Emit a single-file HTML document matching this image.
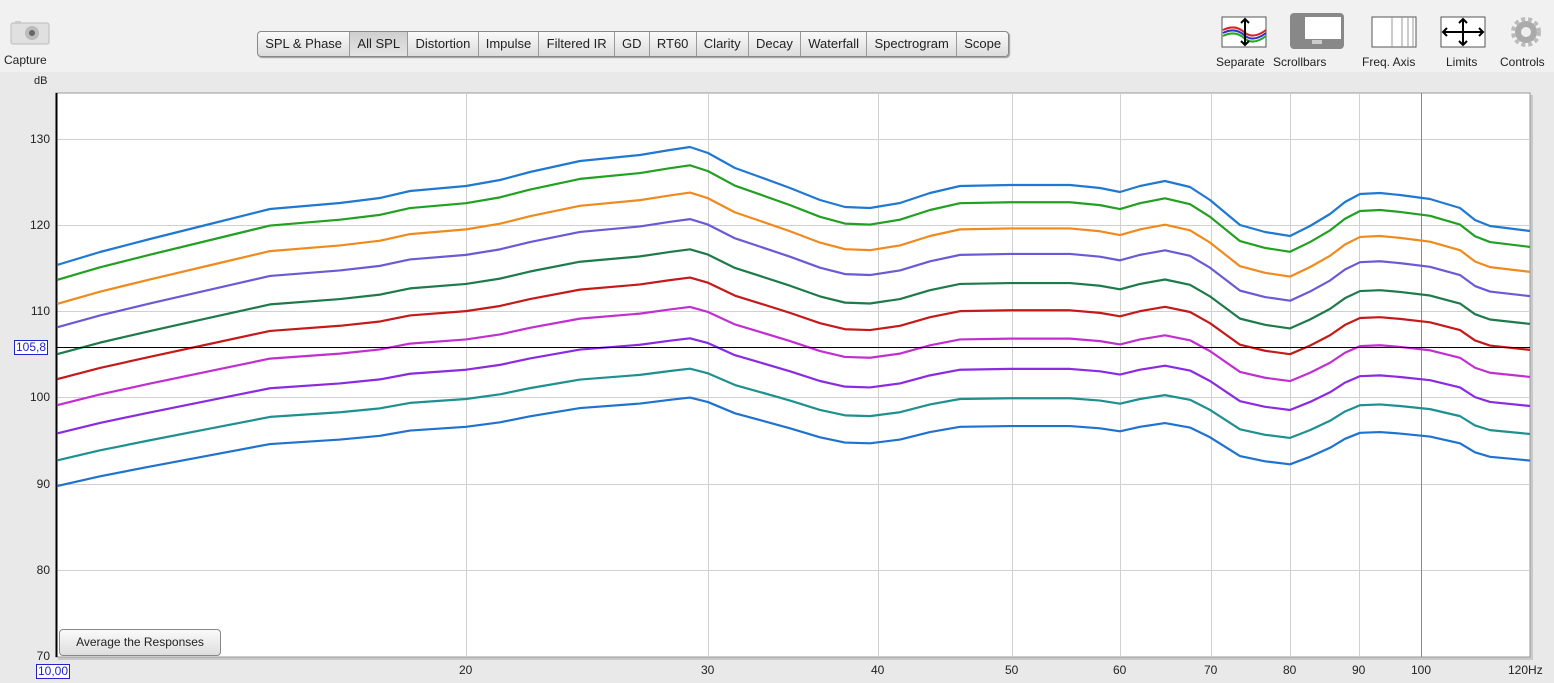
<!DOCTYPE html>
<html><head><style>
body{margin:0;width:1554px;height:683px;background:#e9e9e9;font-family:"Liberation Sans",sans-serif;position:relative;overflow:hidden;font-size:12px;color:#222}
.top{position:absolute;left:0;top:0;width:1554px;height:72px;background:#f1f1f1}
.tabs{position:absolute;left:257px;top:31px;height:24px;display:flex;border:1px solid #888;border-radius:4px;background:linear-gradient(#fafafa,#dcdcdc);box-shadow:1px 1px 1px #999}
.tabs div{padding:0 7.2px;line-height:24px;border-right:1px solid #9a9a9a;font-size:13px}
.tabs div:last-child{border-right:none}
.tabs .sel{background:linear-gradient(#cfcfcf,#e4e4e4)}
.lbl{position:absolute;font-size:12px}
.y{position:absolute;left:0;width:50px;text-align:right;font-size:12px}
.x{position:absolute;top:663px;font-size:12px}
</style></head><body>
<div class="top"></div>
<svg style="position:absolute;left:10px;top:20px" width="40" height="26"><rect x="1" y="3" width="38" height="21" rx="2" fill="#e0e0e0" stroke="#bbb"/><rect x="5" y="1" width="6" height="3" fill="#ccc"/><circle cx="22" cy="13" r="7" fill="#bbb"/><circle cx="22" cy="13" r="3" fill="#666"/></svg>
<div class="lbl" style="left:4px;top:53px">Capture</div>
<div class="lbl" style="left:34px;top:75px;font-size:11px">dB</div>
<div class="tabs"><div>SPL &amp; Phase</div><div class="sel">All SPL</div><div>Distortion</div><div>Impulse</div><div>Filtered IR</div><div>GD</div><div>RT60</div><div>Clarity</div><div>Decay</div><div>Waterfall</div><div>Spectrogram</div><div>Scope</div></div>
<svg style="position:absolute;left:1200px;top:10px" width="354" height="40">
<rect x="22" y="7" width="44" height="30" fill="#fff" stroke="#555"/>
<path d="M23 20 Q35 14 44 22 T66 20" stroke="#d22" fill="none" stroke-width="2"/><path d="M23 23 Q35 17 44 25 T66 23" stroke="#33c" fill="none" stroke-width="2"/><path d="M23 26 Q35 20 44 28 T66 26" stroke="#2a2" fill="none" stroke-width="2"/>
<path d="M45 9V35M41 13l4-4 4 4M41 31l4 4 4-4" stroke="#000" fill="none" stroke-width="2"/>
<rect x="90" y="3" width="54" height="36" rx="4" fill="#888"/><rect x="105" y="7" width="36" height="22" fill="#fff"/><rect x="112" y="30" width="10" height="4" fill="#ccc"/>
<rect x="172" y="7" width="44" height="30" fill="#fff" stroke="#555"/><path d="M192 7v30M202 7v30M208 7v30M213 7v30" stroke="#999"/>
<rect x="241" y="7" width="44" height="30" fill="#fff" stroke="#555"/><path d="M263 9v26M243 22h40M259 13l4-4 4 4M259 31l4 4 4-4M247 18l-4 4 4 4M279 18l4 4-4 4" stroke="#000" fill="none" stroke-width="2"/>
<circle cx="326" cy="22" r="11" fill="#aaa"/><circle cx="326" cy="22" r="13" fill="none" stroke="#bbb" stroke-width="4" stroke-dasharray="4 3"/><circle cx="326" cy="22" r="5" fill="#eee"/>
</svg>
<div class="lbl" style="left:1216px;top:55px">Separate</div>
<div class="lbl" style="left:1273px;top:55px">Scrollbars</div>
<div class="lbl" style="left:1362px;top:55px">Freq. Axis</div>
<div class="lbl" style="left:1446px;top:55px">Limits</div>
<div class="lbl" style="left:1500px;top:55px">Controls</div>
<svg style="position:absolute;left:0;top:0" width="1554" height="683">
<rect x="58" y="95" width="1475" height="565" fill="#aaa" opacity=".5"/>
<rect x="56" y="93" width="1474" height="564" fill="#fff" stroke="#999"/>
<g stroke="#d0d0d0" stroke-width="1">
<path d="M56 139.5H1530M56 225.5H1530M56 311.5H1530M56 397.5H1530M56 484.5H1530M56 570.5H1530"/>
<path d="M466.5 93V657M708.5 93V657M878.5 93V657M1012.5 93V657M1120.5 93V657M1211.5 93V657M1290.5 93V657M1359.5 93V657"/>
</g>
<path d="M1421.5 93V657" stroke="#888"/>
<path d="M56.5 93V657" stroke="#000" stroke-width="2"/>
<defs><polyline id="c" fill="none" stroke-width="2.2" vector-effect="non-scaling-stroke" stroke-linejoin="round" points="57,265 100,252 150,239 210,224 270,209 340,203 380,198 410,191 466,186 500,180 530,172 580,161 640,155 670,150 690,147 708,153 735,168 760,177 790,188 820,200 845,207 870,208 900,203 930,193 960,186 1010,185 1070,185 1100,188 1120,192 1140,186 1165,181 1190,187 1210,200 1240,225 1265,232 1290,236 1310,226 1330,214 1345,202 1360,194 1380,193 1400,195 1430,199 1460,208 1475,220 1490,226 1530,231"/></defs>
<use href="#c" stroke="#1f78d1"/>
<use href="#c" stroke="#22a022" transform="translate(0,22.4) scale(1,0.972)"/>
<use href="#c" stroke="#f08a1e" transform="translate(0,53.8) scale(1,0.944)"/>
<use href="#c" stroke="#6a5ad6" transform="translate(0,84.3) scale(1,0.917)"/>
<use href="#c" stroke="#1f7a4a" transform="translate(0,118.6) scale(1,0.889)"/>
<use href="#c" stroke="#c41a1a" transform="translate(0,151.0) scale(1,0.861)"/>
<use href="#c" stroke="#c22fd0" transform="translate(0,184.5) scale(1,0.833)"/>
<use href="#c" stroke="#8a2be2" transform="translate(0,219.8) scale(1,0.806)"/>
<use href="#c" stroke="#1f9090" transform="translate(0,254.3) scale(1,0.778)"/>
<use href="#c" stroke="#1f72cf" transform="translate(0,287.3) scale(1,0.75)"/>
<path d="M56 347.5H1530" stroke="#000"/>
</svg>
<div class="y" style="top:132px">130</div>
<div class="y" style="top:218px">120</div>
<div class="y" style="top:304px">110</div>
<div class="y" style="top:390px">100</div>
<div class="y" style="top:477px">90</div>
<div class="y" style="top:563px">80</div>
<div class="y" style="top:649px">70</div>
<div style="position:absolute;left:14px;top:340px;border:1px solid #22c;background:#fff;color:#22c;font-size:12px;line-height:13px;padding:0 1px">105,8</div>
<div style="position:absolute;left:36px;top:664px;border:1px solid #22c;background:#fff;color:#22c;font-size:12px;line-height:13px;padding:0 1px">10,00</div>
<div class="x" style="left:459px">20</div><div class="x" style="left:701px">30</div><div class="x" style="left:871px">40</div><div class="x" style="left:1005px">50</div><div class="x" style="left:1113px">60</div><div class="x" style="left:1204px">70</div><div class="x" style="left:1283px">80</div><div class="x" style="left:1352px">90</div><div class="x" style="left:1411px">100</div><div class="x" style="left:1508px">120Hz</div>
<div style="position:absolute;left:59px;top:629px;width:160px;height:25px;border:1px solid #888;border-radius:4px;background:linear-gradient(#fafafa,#dedede);line-height:25px;text-align:center;font-size:12px">Average the Responses</div>
</body></html>
